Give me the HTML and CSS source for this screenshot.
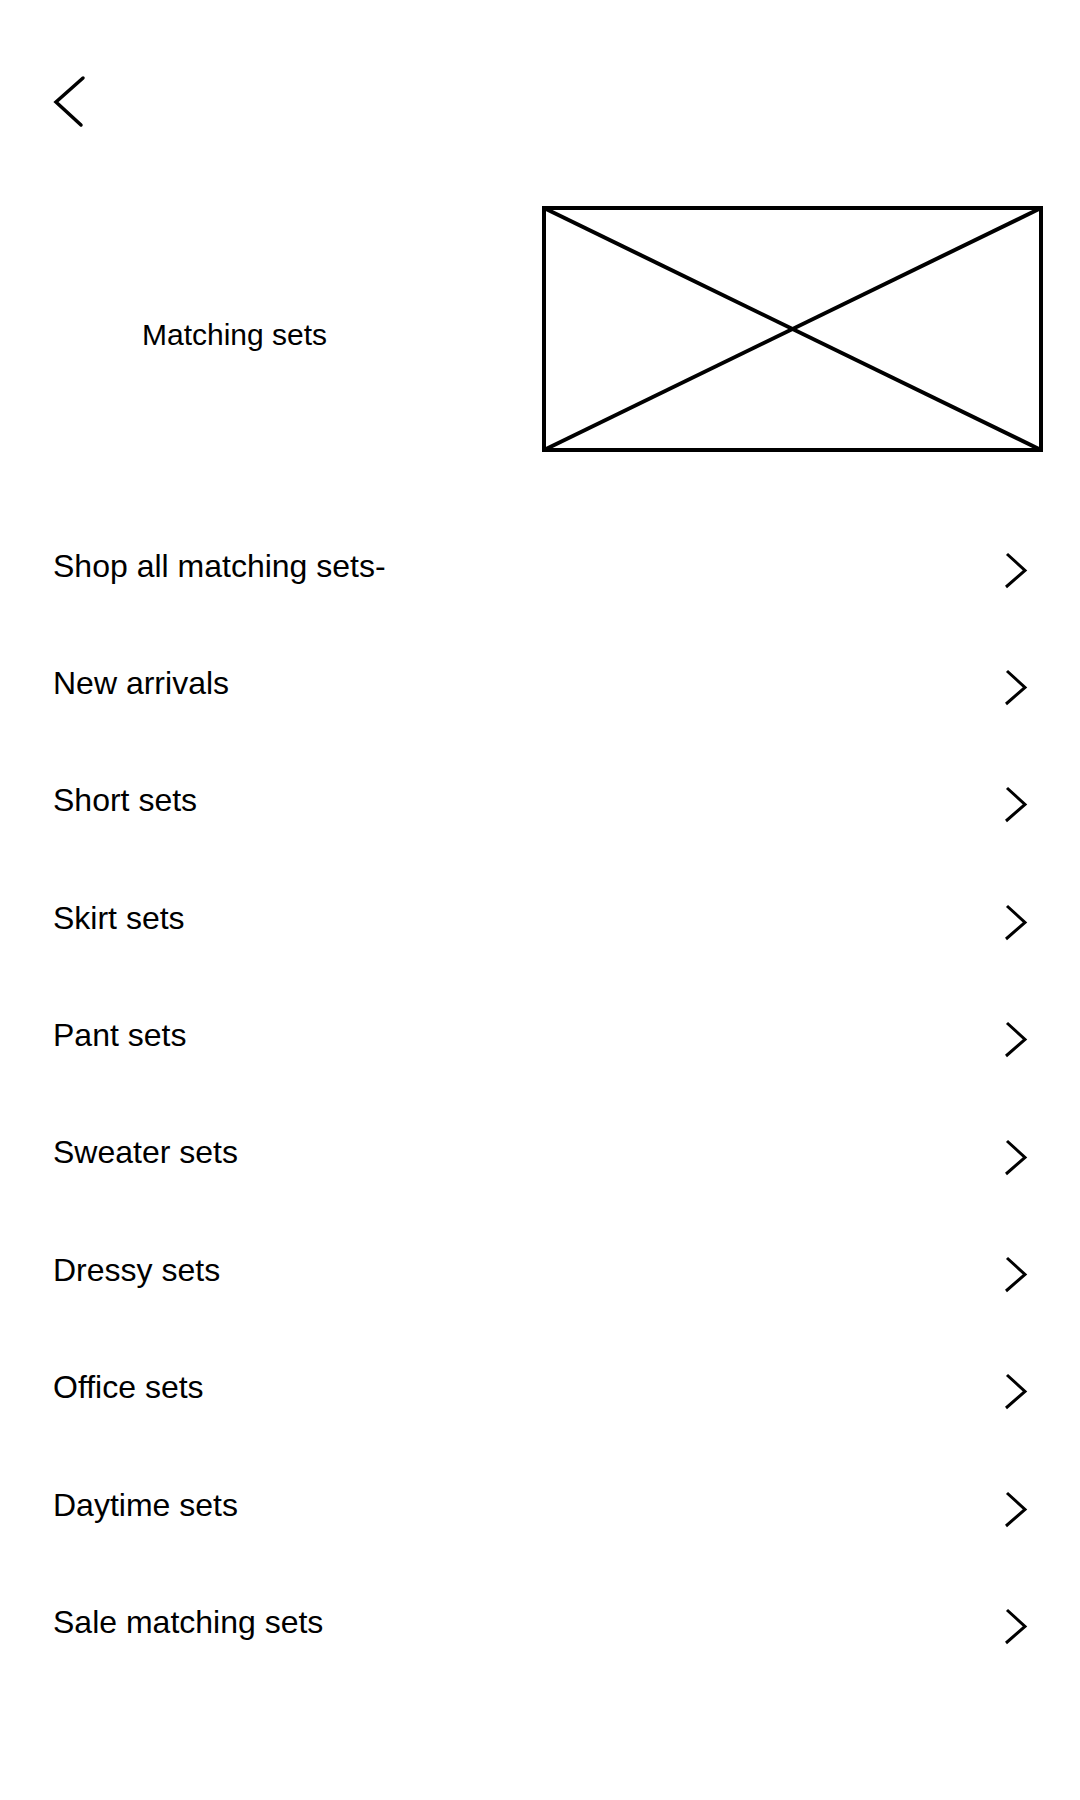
FILE: index.html
```html
<!DOCTYPE html>
<html lang="en">
<head>
<meta charset="utf-8">
<title>Matching sets</title>
<link rel="stylesheet" href="styles.css">
</head>
<body>
<div class="page">
  <header class="header">
    <svg class="back" width="34" height="56" viewBox="0 0 34 56" aria-label="Back">
      <polyline points="31,4 4,28 29,51" fill="none" stroke="#000" stroke-width="3.5" stroke-linecap="round" stroke-linejoin="miter"/>
    </svg>
  </header>

  <section class="banner">
    <div class="banner-title">Matching sets</div>
    <svg class="placeholder" width="501" height="246" viewBox="0 0 501 246">
      <rect x="2" y="2" width="497" height="242" fill="none" stroke="#000" stroke-width="4"/>
      <line x1="2" y1="2" x2="499" y2="244" stroke="#000" stroke-width="4"/>
      <line x1="499" y1="2" x2="2" y2="244" stroke="#000" stroke-width="4"/>
    </svg>
  </section>

  <ul class="menu">
    <li class="menu-item"><span class="label">Shop all matching sets-</span><svg class="chev" width="26" height="48" viewBox="0 0 26 48"><polyline points="4,12 22,28.5 3,45" fill="none" stroke="#000" stroke-width="3"/></svg></li>
    <li class="menu-item"><span class="label">New arrivals</span><svg class="chev" width="26" height="48" viewBox="0 0 26 48"><polyline points="4,12 22,28.5 3,45" fill="none" stroke="#000" stroke-width="3"/></svg></li>
    <li class="menu-item"><span class="label">Short sets</span><svg class="chev" width="26" height="48" viewBox="0 0 26 48"><polyline points="4,12 22,28.5 3,45" fill="none" stroke="#000" stroke-width="3"/></svg></li>
    <li class="menu-item"><span class="label">Skirt sets</span><svg class="chev" width="26" height="48" viewBox="0 0 26 48"><polyline points="4,12 22,28.5 3,45" fill="none" stroke="#000" stroke-width="3"/></svg></li>
    <li class="menu-item"><span class="label">Pant sets</span><svg class="chev" width="26" height="48" viewBox="0 0 26 48"><polyline points="4,12 22,28.5 3,45" fill="none" stroke="#000" stroke-width="3"/></svg></li>
    <li class="menu-item"><span class="label">Sweater sets</span><svg class="chev" width="26" height="48" viewBox="0 0 26 48"><polyline points="4,12 22,28.5 3,45" fill="none" stroke="#000" stroke-width="3"/></svg></li>
    <li class="menu-item"><span class="label">Dressy sets</span><svg class="chev" width="26" height="48" viewBox="0 0 26 48"><polyline points="4,12 22,28.5 3,45" fill="none" stroke="#000" stroke-width="3"/></svg></li>
    <li class="menu-item"><span class="label">Office sets</span><svg class="chev" width="26" height="48" viewBox="0 0 26 48"><polyline points="4,12 22,28.5 3,45" fill="none" stroke="#000" stroke-width="3"/></svg></li>
    <li class="menu-item"><span class="label">Daytime sets</span><svg class="chev" width="26" height="48" viewBox="0 0 26 48"><polyline points="4,12 22,28.5 3,45" fill="none" stroke="#000" stroke-width="3"/></svg></li>
    <li class="menu-item"><span class="label">Sale matching sets</span><svg class="chev" width="26" height="48" viewBox="0 0 26 48"><polyline points="4,12 22,28.5 3,45" fill="none" stroke="#000" stroke-width="3"/></svg></li>
  </ul>
</div>
</body>
</html>
```

FILE: styles.css
```css
html, body {
  margin: 0;
  padding: 0;
  background: #fff;
}

body {
  font-family: "Liberation Sans", Arial, sans-serif;
  color: #000;
}

.page {
  width: 1080px;
  min-height: 1800px;
  box-sizing: border-box;
}

.header {
  padding: 74px 0 0 52px;
  height: 56px;
}

.back {
  display: block;
}

.banner {
  display: flex;
  align-items: center;
  margin-top: 76px;
  height: 246px;
}

.banner-title {
  box-sizing: border-box;
  width: 542px;
  padding-left: 142px;
  font-size: 30px;
  line-height: 1;
  margin-top: 12px;
}

.placeholder {
  display: block;
  flex: none;
}

.menu {
  list-style: none;
  margin: 55px 0 0 0;
  padding: 0;
}

.menu-item {
  display: flex;
  align-items: center;
  justify-content: space-between;
  height: 117.4px;
  padding: 0 51px 0 53px;
}

.label {
  font-size: 32px;
  line-height: 1.2;
}

.chev {
  display: block;
  flex: none;
}
```
